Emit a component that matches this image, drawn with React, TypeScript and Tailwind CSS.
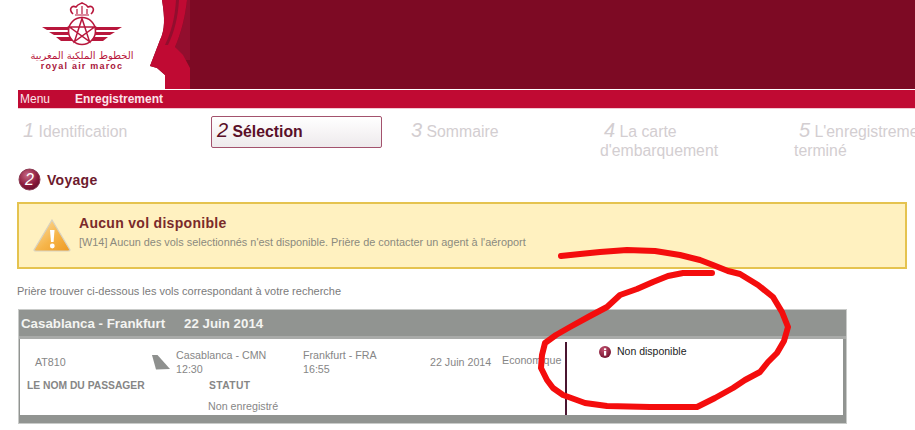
const scribble = "M561 256 L580 254 L600 252 L627 250 L655 251 L680 255 L700 260 L713 265 L728 271 L740 274 L758 285 L773 297 L782 312 L788 327 L784 341 L777 353 L768 362 L760 372 L745 380 L733 388 L715 398 L697 407 L650 407 L607 406 L585 403 L563 395 L553 388 L547 380 L541 368 L542 355 L545 343 L556 335 L570 327 L590 316 L607 307 L620 295 L637 289 L653 282 L668 276 L683 273 L712 273";

function Logo() {
    return (
        <svg width="84" height="46" viewBox="40 0 84 46" className="shrink-0">
            <g fill="none" stroke="#b8173c">
                <path d="M73 12 C68 7 72 3 76 5 C78 2 80 2 82 1 C84 2 86 2 88 5 C92 3 96 7 91 12" strokeWidth="1.6" />
                <path d="M75 13 L89 13 M77 7 L77 12 M82 4 L82 12 M87 7 L87 12" strokeWidth="1.2" />
                <circle cx="82" cy="29" r="13.5" strokeWidth="1.6" />
                <path d="M82 16.5 L89.5 39.5 L69.5 25 L94.5 25 L74.5 39.5 Z" strokeWidth="1.5" />
            </g>
            <g fill="#b8173c">
                <path d="M42 25 L69 25 L68 28 L47 28 Z" />
                <path d="M49 30 L68 30 L69 33 L54 33 Z" />
                <path d="M56 35 L70 35 L73 39 L61 39 Z" />
                <path d="M122 25 L95 25 L96 28 L117 28 Z" />
                <path d="M115 30 L96 30 L95 33 L110 33 Z" />
                <path d="M108 35 L94 35 L91 39 L103 39 Z" />
            </g>
        </svg>
    );
}

function BannerShape() {
    return (
        <svg width="42" height="89" viewBox="148 0 42 89" className="shrink-0 bg-[#7d0a24]">
            <path d="M148 0 H162 C165 18 165 30 160 40 C157 48 153 58 150 66 L157 68 L165 75 V89 H148 Z" fill="#ffffff" />
            <path d="M187 0 H190 V60 H183 L175 47 C181 33 185 18 187 0 Z" fill="#920e2e" />
            <path d="M162 0 H187 C185 18 181 33 175 47 L183 55 L190 68 V89 H165 V75 L157 68 L150 66 C153 58 157 48 160 40 C165 30 165 18 162 0 Z" fill="#c00a33" />
            <path d="M176 0 C175 18 171 33 165 45 L168 45 C174 33 178 18 179 0 Z" fill="#920e2e" />
        </svg>
    );
}

function StepIcon() {
    return (
        <svg width="23" height="23" viewBox="0 0 23 23" className="shrink-0">
            <defs>
                <radialGradient id="stepGrad" cx="0.4" cy="0.3" r="0.8">
                    <stop offset="0" stopColor="#c76a85" />
                    <stop offset="0.6" stopColor="#8c1a3c" />
                    <stop offset="1" stopColor="#5c0c26" />
                </radialGradient>
            </defs>
            <circle cx="11.5" cy="11.5" r="10.5" fill="url(#stepGrad)" stroke="#8a3a52" />
            <text x="11.5" y="17" textAnchor="middle" fontSize="16" fontStyle="italic" fill="#ffffff" fontFamily="Liberation Sans">2</text>
        </svg>
    );
}

function WarningIcon() {
    return (
        <svg width="38" height="33" viewBox="0 0 38 33" className="shrink-0">
            <defs>
                <linearGradient id="warnGrad" x1="0" y1="0" x2="1" y2="1">
                    <stop offset="0" stopColor="#fbe3b0" />
                    <stop offset="0.55" stopColor="#f6b54a" />
                    <stop offset="1" stopColor="#ee9a22" />
                </linearGradient>
            </defs>
            <path d="M19 1 L37 31 Q37 32 35 32 L3 32 Q1 32 1 31 Z" fill="url(#warnGrad)" stroke="#d8d2c0" strokeWidth="1.2" />
            <path d="M17 11 H21.5 L20.6 23 H18 Z" fill="#ffffff" />
            <circle cx="19.3" cy="27" r="2.4" fill="#ffffff" />
        </svg>
    );
}

function InfoIcon() {
    return (
        <svg width="12" height="12" viewBox="0 0 12 12" className="shrink-0">
            <defs>
                <radialGradient id="infoGrad" cx="0.4" cy="0.3" r="0.8">
                    <stop offset="0" stopColor="#c4506f" />
                    <stop offset="1" stopColor="#6a0c28" />
                </radialGradient>
            </defs>
            <circle cx="6" cy="6" r="6" fill="url(#infoGrad)" />
            <rect x="5" y="5" width="2.2" height="4.6" fill="#ffffff" />
            <rect x="5" y="2.3" width="2.2" height="1.8" fill="#ffffff" />
        </svg>
    );
}

export default function App() {
    return (
        <div className="relative h-[430px] w-[915px] overflow-hidden bg-white font-['Liberation_Sans',Arial,sans-serif]">
            <header className="flex h-[89px]">
                <div className="flex w-[148px] shrink-0 flex-col items-center bg-white pl-[16px] pt-[2px]">
                    <Logo />
                    <div className="mt-[2px] whitespace-nowrap font-['DejaVu_Sans',sans-serif] text-[10px] leading-[12px] text-[#b8173c]" dir="rtl">
                        الخطوط الملكية المغربية
                    </div>
                    <div className="whitespace-nowrap text-[9px] font-bold leading-[9px] tracking-[1.2px] text-[#a8143a]">royal air maroc</div>
                </div>
                <BannerShape />
                <div className="flex-1 bg-[#7d0a24]" />
            </header>

            <nav className="ml-[18px] mt-[1px] flex h-[19px] items-center border-b border-[#f3c6d2] bg-[#c00a33] text-[12px] text-[#fbe3e9]">
                <span className="ml-[2px] w-[55px]">Menu</span>
                <span className="font-bold">Enregistrement</span>
            </nav>

            <div className="ml-[18px] mt-[7px] flex h-[45px] text-[15.8px] leading-[19px] text-[#d3ced1]">
                <div className="w-[193px] shrink-0 pl-[5px] pt-[4px]">
                    <i className="text-[20px] font-light leading-none">1</i> Identification
                </div>
                <div className="w-[193px] shrink-0">
                    <div className="h-[32px] w-[171px] rounded-[2px] border border-[#a3526d] bg-gradient-to-b from-white to-[#eeeaec] pl-[5px] pt-[3px] font-bold text-[#5a0f28]">
                        <i className="text-[20px] font-normal leading-none">2</i> Sélection
                    </div>
                </div>
                <div className="w-[193px] shrink-0 pl-[7px] pt-[4px]">
                    <i className="text-[20px] leading-none">3</i> Sommaire
                </div>
                <div className="w-[193px] shrink-0 pl-[3px] pt-[4px] indent-[4px]">
                    <i className="text-[20px] leading-none">4</i> La carte<br />d'embarquement
                </div>
                <div className="w-[193px] shrink-0 pl-[4px] pt-[4px] indent-[5px]">
                    <i className="text-[20px] leading-none">5</i> L'enregistrement<br />terminé
                </div>
            </div>

            <div className="ml-[18px] mt-[7px] flex h-[23px] items-center gap-[6px]">
                <StepIcon />
                <h2 className="pt-[1px] text-[14px] font-bold tracking-[0.3px] text-[#6d1a2e]">Voyage</h2>
            </div>

            <div className="ml-[17px] mt-[11px] flex h-[67px] w-[890px] items-center border-2 border-[#e5c34f] bg-[#fff1c0] pl-[14px]">
                <WarningIcon />
                <div className="mb-[9px] ml-[8px]">
                    <div className="text-[14px] font-bold leading-[18px] tracking-[0.3px] text-[#7a2a2a]">Aucun vol disponible</div>
                    <div className="mt-[3px] text-[10.9px] leading-[14px] text-[#8b8a7e]">
                        [W14] Aucun des vols selectionnés n'est disponible. Prière de contacter un agent à l'aéroport
                    </div>
                </div>
            </div>

            <p className="ml-[17px] mt-[15px] text-[11px] leading-[14px] text-[#7b7b7b]">
                Prière trouver ci-dessous les vols correspondant à votre recherche
            </p>

            <div className="ml-[18px] mt-[11px] h-[115px] w-[829px] border border-[#c9cbc9] bg-[#919491]">
                <div className="flex h-[26px] items-center gap-[19px] pl-[2px] pt-[2px] text-[13.3px] font-bold text-[#f4f4f2]">
                    <span>Casablanca - Frankfurt</span>
                    <span>22 Juin 2014</span>
                </div>
                <div className="h-[3px] bg-[#a9aba9]" />
                <div className="ml-[1px] flex h-[76px] w-[823px] bg-white pt-[3px] text-[10.7px] text-[#868686]">
                    <div className="w-[545px] shrink-0">
                        <div className="flex h-[35px] items-center pt-[4px] leading-[14px]">
                            <div className="w-[132px] pl-[15px]">AT810</div>
                            <svg width="24" height="16" viewBox="0 0 24 16" className="shrink-0">
                                <path d="M0 1 H5.5 L18 15 L4 15.5 Z" fill="#8e908e" />
                            </svg>
                            <div className="w-[127px]">Casablanca - CMN<br />12:30</div>
                            <div className="w-[127px]">Frankfurt - FRA<br />16:55</div>
                            <div className="w-[72px] pt-[1px]">22 Juin 2014</div>
                            <div className="w-[60px] whitespace-nowrap pb-[3px]">Economique</div>
                        </div>
                        <div className="flex pl-[7px] pt-[3px] text-[10.3px] font-bold leading-[12px]">
                            <div className="w-[182px] whitespace-nowrap">LE NOM DU PASSAGER</div>
                            <div className="tracking-[0.4px]">STATUT</div>
                        </div>
                        <div className="ml-[188px] mt-[8px] leading-[13px]">Non enregistré</div>
                    </div>
                    <div className="h-[73px] w-[2px] shrink-0 bg-[#4a1530]" />
                    <div className="ml-[32px] mt-[3px] flex h-[12px] items-center gap-[6px] pt-[1px] text-[10.5px] text-[#222222]">
                        <InfoIcon />
                        <span>Non disponible</span>
                    </div>
                </div>
            </div>

            <svg width="915" height="430" viewBox="0 0 915 430" className="pointer-events-none absolute left-0 top-0">
                <path d={scribble} fill="none" stroke="#f40d0d" strokeWidth="6" strokeLinecap="round" strokeLinejoin="round" />
            </svg>
        </div>
    );
}
